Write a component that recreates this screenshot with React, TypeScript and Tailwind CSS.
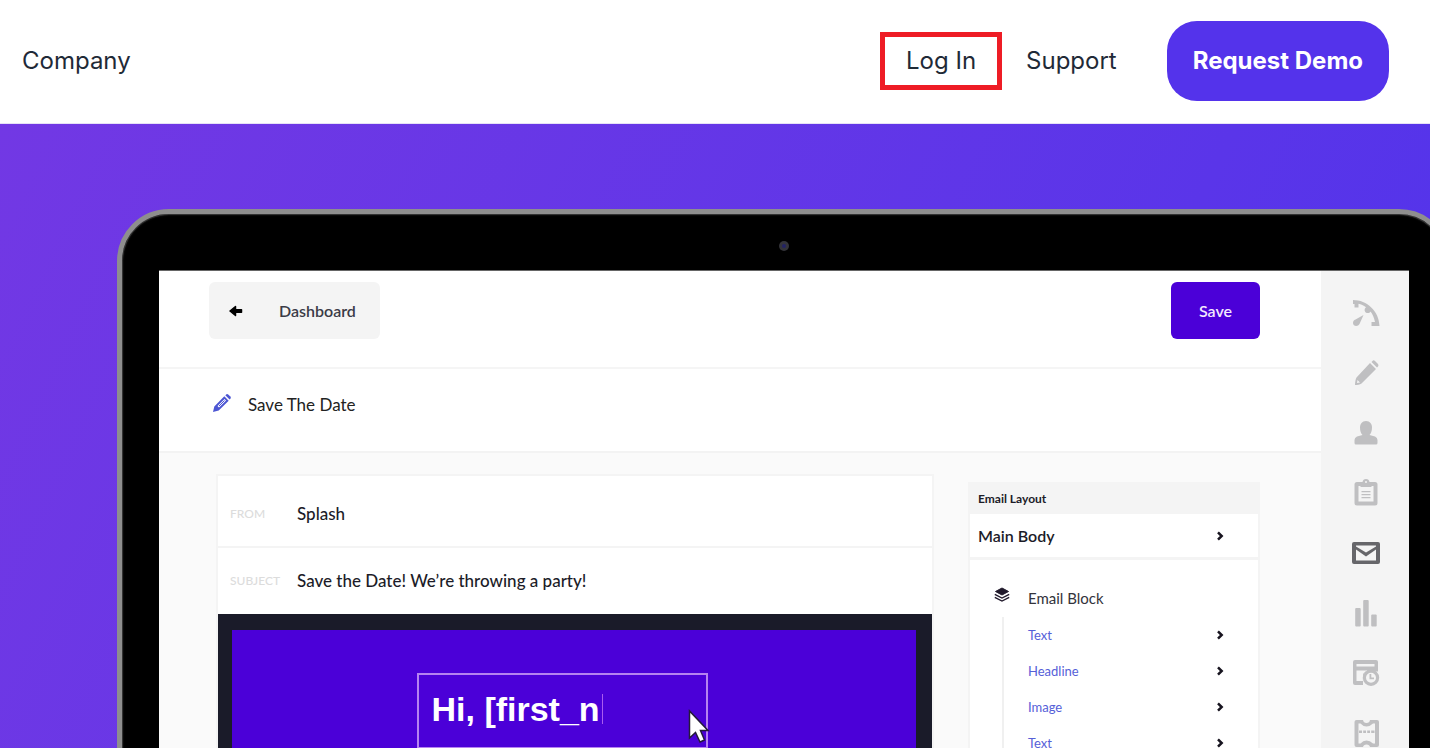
import type { ReactNode } from "react";

const blocks = ["Text", "Headline", "Image", "Text"];

function Icon({ children, size = 30 }: { children: ReactNode; size?: number }) {
  return (
    <svg
      width={size}
      height={size}
      viewBox="0 0 30 30"
      fill="currentColor"
      aria-hidden="true"
    >
      {children}
    </svg>
  );
}

const tools = [
  {
    name: "Overview",
    icon: (
      <Icon>
        <path d="M2 2C16 2 28 13 28.500 28H20.500V24H24C23 19.500 21.500 16 19.500 13.500C18.500 15.500 15 15.500 14 13.500C13 11.500 14 10 15 9.200C12.500 7.500 10 6.300 7.500 5.800V9.500H3.500V6H2Z" />
        <path d="M12.500 17L8.500 26C7 29 2 28.500 2 25C2 23 3 22 4.500 21.500Z" />
      </Icon>
    ),
  },
  {
    name: "Design",
    icon: (
      <Icon>
        <path d="M19 5L25 11L10.500 25.500C9 26.500 6 27 4 27C4 25 4.500 21 5.500 19.500ZM6.500 22L6 25L9 24.500Z" fillRule="evenodd" />
        <path d="M20.500 4L22 2.500Q23 2 24 3L27 6Q28 7 27 8.500L26 9.500Z" />
      </Icon>
    ),
  },
  {
    name: "Guests",
    icon: (
      <Icon>
        <path d="M15 3C19 3 21 6 21 9.500C21 13 20 15.500 18.500 17L24 18.500Q26.500 19.500 26.500 22V25Q26.500 26.500 25 26.500H5Q3.500 26.500 3.500 25V22Q3.500 19.500 6 18.500L11.500 17C10 15.500 9 13 9 9.500C9 6 11 3 15 3Z" />
      </Icon>
    ),
  },
  {
    name: "Forms",
    icon: (
      <Icon>
        <path
          fillRule="evenodd"
          d="M6 4H11.500Q12 1 15 1Q18 1 18.500 4H24Q26.500 4 26.500 6.500V25Q26.500 27.500 24 27.500H6Q3.500 27.500 3.500 25V6.500Q3.500 4 6 4ZM7.500 8V23.500H22.500V8H20.500V9H9.500V8ZM15 3A1 1 0 1 0 15 5A1 1 0 1 0 15 3Z"
        />
        <path d="M10.500 13H19.500V14.300H10.500ZM10.500 16H19.500V17.300H10.500ZM10.500 19H19.500V20.300H10.500Z" />
      </Icon>
    ),
  },
  {
    name: "Emails",
    active: true,
    icon: (
      <Icon>
        <path
          fillRule="evenodd"
          d="M3 4H27Q29 4 29 6V24Q29 26 27 26H3Q1 26 1 24V6Q1 4 3 4ZM5 11.500V22.500H25V11.500L15 18.500ZM5 7.500V8.500L15 14.500L25 8.500V7.500Z"
        />
      </Icon>
    ),
  },
  {
    name: "Analytics",
    icon: (
      <Icon>
        <rect x="4.200" y="10" width="5.500" height="18.500" rx="1" />
        <rect x="12.200" y="2" width="5.500" height="26.500" rx="1" />
        <rect x="20.200" y="16.500" width="5.500" height="12" rx="1" />
      </Icon>
    ),
  },
  {
    name: "Schedule",
    icon: (
      <Icon>
        <path
          fillRule="evenodd"
          d="M4 2H25Q27 2 27 4V13.500H14.500L12 16V27H4Q2 27 2 25V4Q2 2 4 2ZM5.500 6V8.500H23.500V6ZM5.500 12.500V23H12Q11 16 16.500 12.500Z"
        />
        <path
          fillRule="evenodd"
          d="M20 11.500A8.200 8.200 0 1 1 20 27.900A8.200 8.200 0 1 1 20 11.500ZM20 14.700A5 5 0 1 0 20 24.700A5 5 0 1 0 20 14.700Z"
        />
        <path d="M18.500 16H20.300V19.500H23V21.300H18.500Z" />
      </Icon>
    ),
  },
  {
    name: "Tickets",
    icon: (
      <Icon>
        <path
          fillRule="evenodd"
          d="M5.500 2H12Q12.500 5 15.500 5Q18.500 5 19 2H26Q28 2 28 4V27Q28 29 26 29H19Q18.500 26.500 15.500 26.500Q12.500 26.500 12 29H5.500Q3.500 29 3.500 27V4Q3.500 2 5.500 2ZM7.500 5.500V25.500H9.500Q12 22.500 15.500 22.500Q19 22.500 22 25.500H24V5.500H22Q19 8.500 15.500 8.500Q12 8.500 9.500 5.500Z"
        />
        <path d="M8 12.500H11V15H8ZM12.200 12.500H15V15H12.200ZM16.200 12.500H19V15H16.200ZM20.200 12.500H23.500V15H20.200Z" />
      </Icon>
    ),
  },
];

function Chevron() {
  return (
    <svg width="8" height="10" viewBox="0 0 8 10" fill="none" aria-hidden="true">
      <path d="M2 1.300L5.700 5L2 8.700" stroke="#17141f" strokeWidth="2.500" />
    </svg>
  );
}

function Header() {
  return (
    <header className="flex h-31 shrink-0 items-center justify-between border-b border-[#e6e1f7] bg-white pr-[41px] pb-0.5 pl-[22px] font-['Inter',sans-serif] text-2xl text-[#1f2a37]">
      <a href="#company">Company</a>
      <nav className="flex items-center">
        <a
          href="#login"
          className="flex h-[58px] items-center border-5 border-[#ee1c25] px-[21px]"
        >
          Log In
        </a>
        <a href="#support" className="ml-6">
          Support
        </a>
        <button
          type="button"
          className="ml-[50px] h-20 rounded-[30px] bg-[#5433eb] px-[26px] font-bold text-white"
        >
          Request Demo
        </button>
      </nav>
    </header>
  );
}

function TopBar() {
  return (
    <>
      <div className="flex items-start justify-between border-b-2 border-[#f5f5f5] pt-[11px] pr-[61px] pb-7 pl-[50px] text-base font-semibold">
        <button
          type="button"
          className="flex h-[57px] items-center gap-9 rounded-md bg-[#f4f4f4] pr-6 pl-5 text-[#3b3b47]"
        >
          <svg width="14" height="12" viewBox="0 0 14 12" aria-hidden="true">
            <path
              d="M6.500 1.500L1 6L6.500 10.500V7.300H12.500V4.700H6.500Z"
              fill="#000"
              stroke="#000"
              strokeWidth="1.500"
              strokeLinejoin="round"
            />
          </svg>
          Dashboard
        </button>
        <button
          type="button"
          className="h-[57px] rounded-md bg-[#4b00d8] px-7 text-[#f3e9ff]"
        >
          Save
        </button>
      </div>
      <div className="flex h-21 items-center gap-4 border-b-2 border-[#f3f3f3] pb-2.5 pl-[53px] text-[#222]">
        <svg width="20" height="20" viewBox="0 0 20 20" className="mb-1" aria-hidden="true">
          <path
            fillRule="evenodd"
            d="M12.300 3.300L16.700 7.700L6.700 17.500L1 19L2.300 13.500ZM12.500 6L5.500 13L7 14.500L14 7.500Z"
            fill="#4c56d3"
          />
          <path d="M7 13L12.500 7.500" stroke="#4c56d3" />
          <path d="M13.300 2.300L14.500 1.200Q15.300 0.600 16.200 1.400L18.400 3.600Q19.200 4.500 18.600 5.400L17.600 6.600Z" fill="#4c56d3" />
        </svg>
        <h1 className="text-[17px]">Save The Date</h1>
      </div>
    </>
  );
}

function EmailPreview() {
  return (
    <section className="flex-1 border-2 border-[#f4f4f4] bg-white text-[#1c1c28]">
      <div className="flex h-[72px] items-center border-b-2 border-[#f4f4f4] pt-1.5 pl-3">
        <label htmlFor="from" className="w-[67px] text-xs font-medium text-[#dcdcdc]">
          FROM
        </label>
        <input
          id="from"
          defaultValue="Splash"
          className="flex-1 text-[17px] font-medium outline-none"
        />
      </div>
      <div className="flex h-[66px] items-center pl-3">
        <label htmlFor="subject" className="w-[67px] text-xs font-medium text-[#dcdcdc]">
          SUBJECT
        </label>
        <input
          id="subject"
          defaultValue="Save the Date! We’re throwing a party!"
          className="flex-1 text-[17px] font-medium outline-none"
        />
      </div>
      <div className="bg-[#1a1b29] p-4 pl-[14px]">
        <div className="flex justify-center bg-[#4b00d8] pt-[43px] pb-24">
          <div
            role="textbox"
            aria-label="Headline"
            className="relative mr-6 flex h-[76px] w-[291px] items-center border-2 border-[#b583f0] pb-1 pl-[13px] font-['Liberation_Sans',sans-serif] text-[34px] font-bold text-white"
          >
            Hi, [first_n
            <span className="ml-0.5 h-[30px] w-px bg-[#a95cf0]" />
            <svg
              width="22"
              height="34"
              viewBox="0 0 22 34"
              className="absolute top-[34px] -right-1"
              aria-hidden="true"
            >
              <path
                d="M1.500 2V29L7.500 23.500L12 33L16.500 31L12.500 21.500H20Z"
                fill="#fff"
                stroke="#241b3a"
                strokeWidth="1.500"
              />
            </svg>
          </div>
        </div>
      </div>
    </section>
  );
}

function LayoutPanel() {
  return (
    <aside className="mt-2 w-[292px] shrink-0 border-x-2 border-[#f4f4f4] bg-white text-[#1c1c28]">
      <h2 className="flex h-8 items-center bg-[#f4f4f4] pt-0.5 pl-2 text-xs font-bold">
        Email Layout
      </h2>
      <button
        type="button"
        className="flex h-[46px] w-full items-center justify-between border-b-3 border-[#f4f4f4] pr-[34px] pl-2 text-base font-semibold"
      >
        Main Body
        <Chevron />
      </button>
      <div className="pt-6 pl-6">
        <h3 className="flex h-7 items-center gap-[18px] text-[15px] text-[#33333b]">
          <svg
            width="16"
            height="16"
            viewBox="0 0 16 16"
            fill="none"
            stroke="#211a2c"
            className="mb-1.5"
            aria-hidden="true"
          >
            <path d="M8 1L14.500 4.500L8 8L1.500 4.500Z" fill="#211a2c" />
            <path d="M0.800 7.300L8 11L15.200 7.300M0.800 10.300L8 14L15.200 10.300" strokeWidth="1.400" />
          </svg>
          Email Block
        </h3>
        <ul className="mt-[5px] ml-2 border-l-2 border-[#f0f0f0]">
          {blocks.map((block, i) => (
            <li key={i}>
              <a
                href="#block"
                className="flex h-9 items-center justify-between pr-[34px] pl-6 text-[13px] leading-4 text-[#5560d8]"
              >
                {block}
                <Chevron />
              </a>
            </li>
          ))}
        </ul>
      </div>
    </aside>
  );
}

export default function App() {
  return (
    <div className="flex h-screen flex-col overflow-hidden">
      <Header />
      <main className="flex min-h-0 flex-1 flex-col overflow-hidden bg-linear-115 from-[#7238e4] to-[#5033eb] pt-[85px] pl-[117px] font-['Lato',sans-serif]">
        <div className="-mr-[21px] shrink-0 rounded-t-[52px] border-5 border-[#8e8e8e] bg-black px-[37px] shadow-[inset_0_0_0_1px_#333,inset_0_0_2px_1px_#222]">
          <div className="flex h-14 items-center justify-center pt-2">
            <span className="flex size-[10px] items-center justify-center rounded-full bg-[#34343a]">
              <span className="size-1 rounded-full bg-[#232366]" />
            </span>
          </div>
          <div className="flex border-t border-[#666] bg-white">
            <div className="min-w-0 flex-1">
              <TopBar />
              <div className="flex gap-[34px] bg-[#fafafa] pt-[21px] pr-[61px] pl-[57px]">
                <EmailPreview />
                <LayoutPanel />
              </div>
            </div>
            <nav className="flex w-[88px] shrink-0 flex-col bg-[#f4f4f4] pt-3 pl-0.5">
              {tools.map((tool) => (
                <a
                  key={tool.name}
                  href="#tool"
                  aria-label={tool.name}
                  className={`flex h-15 items-center justify-center ${
                    tool.active ? "text-[#66666a]" : "text-[#bfbfc1]"
                  }`}
                >
                  {tool.icon}
                </a>
              ))}
            </nav>
          </div>
        </div>
      </main>
    </div>
  );
}
